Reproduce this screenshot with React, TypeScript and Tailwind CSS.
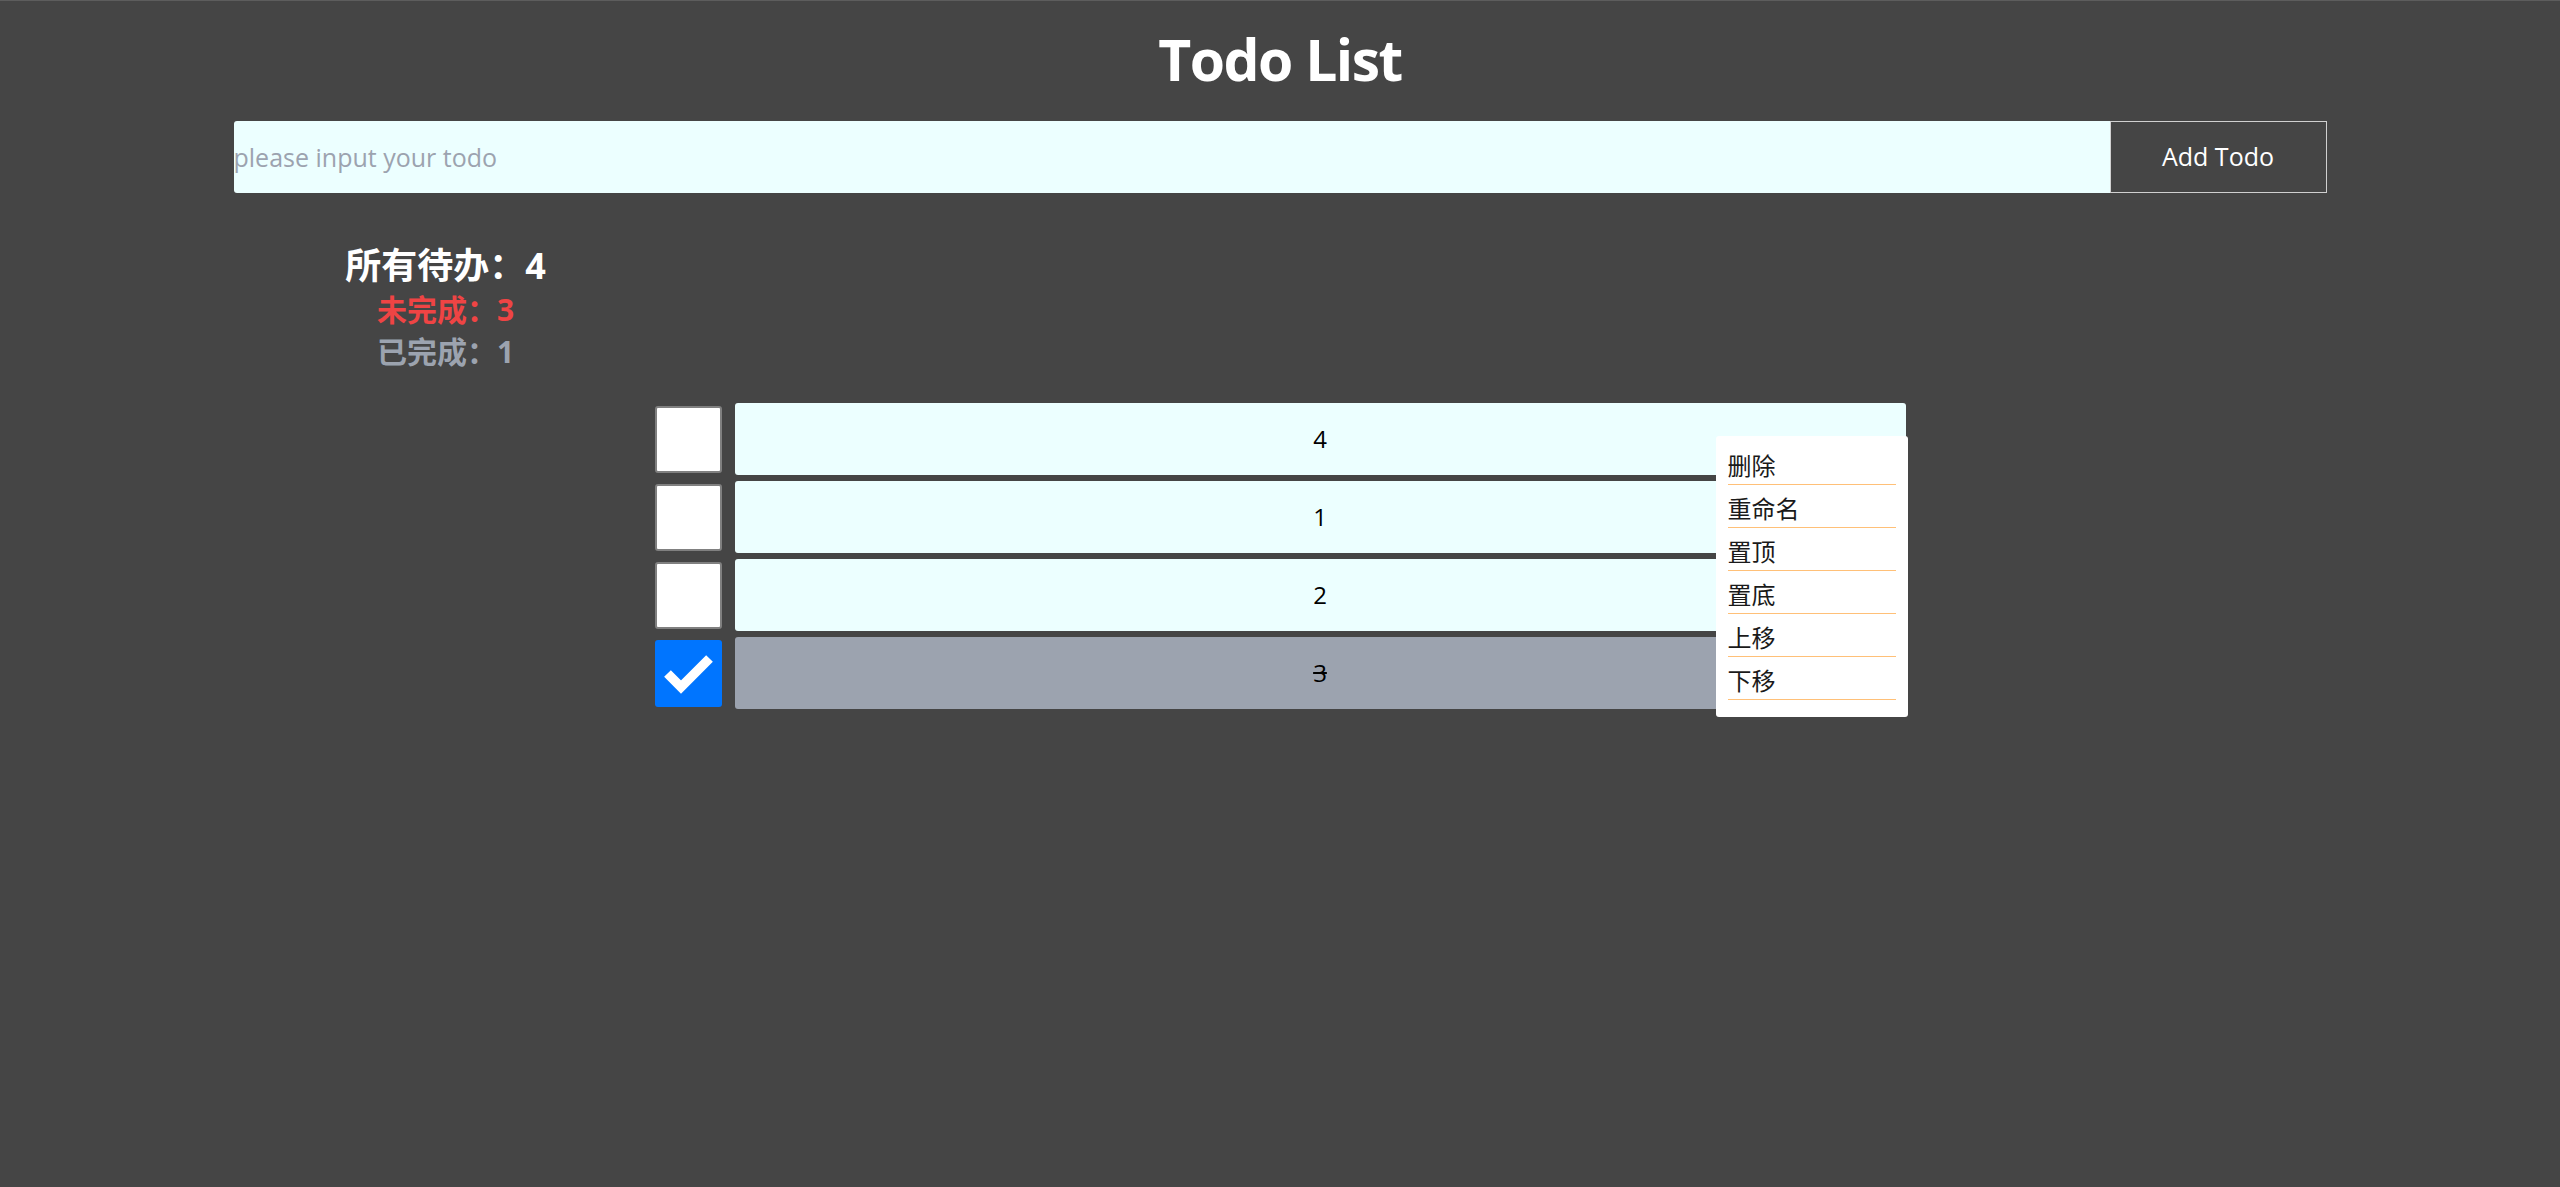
import React from 'react';

interface Todo {
  id: number;
  title: string;
  done: boolean;
}

const todos: Todo[] = [
  { id: 4, title: '4', done: false },
  { id: 1, title: '1', done: false },
  { id: 2, title: '2', done: false },
  { id: 3, title: '3', done: true },
];

const menuItems = ['删除', '重命名', '置顶', '置底', '上移', '下移'];

const CheckBox: React.FC<{ checked: boolean }> = ({ checked }) => {
  if (checked) {
    return (
      <div className="w-[67px] h-[67px] shrink-0 rounded-[3px] bg-[#0075ff] flex items-center justify-center">
        <svg width="67" height="67" viewBox="0 0 67 67">
          <polyline points="12.5,33.5 26,47 54.5,18.5" fill="none" stroke="#fff" strokeWidth="9.5" />
        </svg>
      </div>
    );
  }
  return <div className="w-[67px] h-[67px] shrink-0 rounded-[3px] border-2 border-[#808080] bg-white" />;
};

const App: React.FC = () => {
  const total = todos.length;
  const doneCount = todos.filter((t) => t.done).length;

  return (
    <div className="min-h-screen bg-[#454545] border-t border-[#5d5d5d] pt-[22px] font-['Open_Sans','Noto_Sans_CJK_SC',sans-serif]">
      <h1 className="text-center text-white font-bold text-[57px] tracking-[-1.5px] leading-[72px]">Todo List</h1>

      <div className="w-[2093px] mx-auto mt-[26px]">
        <div className="flex h-[72px]">
          <input
            className="flex-1 h-full bg-[#ecffff] rounded-l-[3px] text-[25px] text-black outline-none placeholder:text-[#9ca3af]"
            placeholder="please input your todo"
          />
          <button className="w-[217px] h-full border border-[#d0d0d0] text-white text-[25px]">Add Todo</button>
        </div>

        <div className="w-[424px] mt-[50px] text-center font-bold">
          <div className="text-white text-[36px] leading-[46px]">所有待办：{total}</div>
          <div className="text-[#ef4444] text-[30px] leading-[42px]">未完成：{total - doneCount}</div>
          <div className="text-[#9ca3af] text-[30px] leading-[42px]">已完成：{doneCount}</div>
        </div>
      </div>

      <div className="relative w-[1251px] mx-auto mt-[30px]">
        {todos.map((todo) => (
          <div key={todo.id} className="flex items-center gap-[13px] h-[72px] mb-[6px]">
            <CheckBox checked={todo.done} />
            <div
              className={`flex-1 h-full rounded-[3px] text-center text-[24px] leading-[72px] text-black ${
                todo.done ? 'bg-[#9ca3af] line-through' : 'bg-[#ecffff]'
              }`}
            >
              {todo.title}
            </div>
          </div>
        ))}

        <div className="absolute left-[1061px] top-[33px] w-[192px] bg-white rounded-[3px] px-[12px] pt-[6px] pb-[17px]">
          {menuItems.map((item) => (
            <div key={item} className="h-[43px] pt-[6px] leading-[36px] text-[24px] text-[#1a1a1a] border-b border-[#ffc078]">
              {item}
            </div>
          ))}
        </div>
      </div>
    </div>
  );
};

export default App;
